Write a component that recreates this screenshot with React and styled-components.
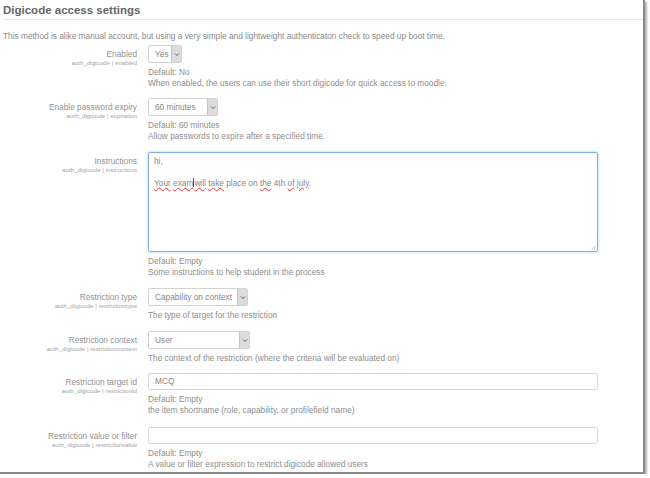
import React from "react";
import styled, { createGlobalStyle } from "styled-components";

const Global = createGlobalStyle`
  html, body {
    margin: 0;
    padding: 0;
    background: #ffffff;
  }
  body {
    font-family: "Liberation Sans", Arial, sans-serif;
    -webkit-font-smoothing: antialiased;
  }
`;

const Frame = styled.div`
  width: 645px;
  height: 474px;
  background: #fff;
  border-right: 2px solid #8a8a8a;
  border-bottom: 2px solid #8a8a8a;
  box-shadow: 2px 2px 2px rgba(0, 0, 0, 0.3);
  overflow: hidden;
  box-sizing: border-box;
  padding: 0 3px;
`;

const Title = styled.h2`
  margin: 0;
  padding-top: 3px;
  height: 15px;
  font-size: 11.5px;
  font-weight: bold;
  color: #666;
  line-height: 15px;
`;

const Rule = styled.div`
  height: 1px;
  background: #e6e6e6;
  margin-top: 1px;
  margin-right: -3px;
`;

const Intro = styled.p`
  margin: 11px 0 0;
  font-size: 8.3px;
  line-height: 11px;
  color: #8a8a8a;
`;

const Form = styled.div`
  margin-top: 3px;
  display: flex;
  flex-direction: column;
`;

const Row = styled.div`
  display: grid;
  grid-template-columns: 134px 1fr;
  column-gap: 11px;
  margin-bottom: ${(p) => p.$gap || 9}px;
`;

const LabelCol = styled.div`
  text-align: right;
  padding-top: 4px;
`;

const Label = styled.div`
  font-size: 8.3px;
  line-height: 10px;
  color: #929292;
`;

const Key = styled.div`
  font-size: 6.2px;
  line-height: 8px;
  color: #a4a4a4;
`;

const Field = styled.div`
  display: flex;
  flex-direction: column;
  align-items: flex-start;
`;

const SelectBox = styled.div`
  width: ${(p) => p.$w}px;
  height: 18px;
  box-sizing: border-box;
  border: 1px solid #d2d2d2;
  border-radius: 2px;
  display: flex;
  align-items: stretch;
  background: #fff;
`;

const SelectText = styled.div`
  flex: 1;
  font-size: 8.3px;
  line-height: 16px;
  padding-left: 6px;
  color: #888;
  white-space: nowrap;
  overflow: hidden;
`;

const Arrow = styled.div`
  width: 9px;
  background: #dcdcdc;
  border-left: 1px solid #c2c2c2;
  display: flex;
  align-items: center;
  justify-content: center;
`;

const Input = styled.div`
  width: 450px;
  height: 17px;
  box-sizing: border-box;
  border: 1px solid #d8d8d8;
  border-radius: 2px;
  font-size: 8.3px;
  line-height: 15px;
  padding-left: 6px;
  color: #888;
`;

const TextBox = styled.div`
  position: relative;
  width: 450px;
  height: 100px;
  box-sizing: border-box;
  border: 1px solid #7fb0e0;
  border-radius: 2px;
  box-shadow: 0 0 3px rgba(102, 160, 225, 0.6);
  padding: 3px 5px;
  font-size: 8.3px;
  line-height: 11px;
  color: #888;
`;

const Spell = styled.span`
  text-decoration: underline wavy #e33;
  text-decoration-thickness: 1px;
  text-underline-offset: 1px;
`;

const Caret = styled.span`
  display: inline-block;
  width: 0;
  height: 9px;
  border-left: 1px solid #555;
  vertical-align: -1px;
`;

const Grip = styled.svg`
  position: absolute;
  right: 1px;
  bottom: 1px;
`;

const Help = styled.div`
  margin-top: 4px;
  font-size: 8.3px;
  line-height: 11px;
  color: #8e8e8e;
`;

const Chevron = () => (
  <svg width="6" height="5" viewBox="0 0 6 5">
    <path d="M1 1.5 L3 3.5 L5 1.5" fill="none" stroke="#666" strokeWidth="1" />
  </svg>
);

const Select = ({ value, width }) => (
  <SelectBox $w={width}>
    <SelectText>{value}</SelectText>
    <Arrow>
      <Chevron />
    </Arrow>
  </SelectBox>
);

const Setting = ({ label, name, gap, children, help }) => (
  <Row $gap={gap}>
    <LabelCol>
      <Label>{label}</Label>
      <Key>auth_digicode | {name}</Key>
    </LabelCol>
    <Field>
      {children}
      <Help>
        {help.map((h) => (
          <div key={h}>{h}</div>
        ))}
      </Help>
    </Field>
  </Row>
);

export default function App() {
  return (
    <>
      <Global />
      <Frame>
        <Title>Digicode access settings</Title>
        <Rule />
        <Intro>
          This method is alike manual account, but using a very simple and lightweight
          authenticaton check to speed up boot time.
        </Intro>
        <Form>
          <Setting
            label="Enabled"
            name="enabled"
            gap={9}
            help={["Default: No", "When enabled, the users can use their short digicode for quick access to moodle."]}
          >
            <Select value="Yes" width={34} />
          </Setting>
          <Setting
            label="Enable password expiry"
            name="expiration"
            gap={10}
            help={["Default: 60 minutes", "Allow passwords to expire after a specified time."]}
          >
            <Select value="60 minutes" width={70} />
          </Setting>
          <Setting
            label="Instructions"
            name="instructions"
            gap={10}
            help={["Default: Empty", "Some instructions to help student in the process"]}
          >
            <TextBox>
              <div>hi,</div>
              <div>&nbsp;</div>
              <div>
                <Spell>Your</Spell> <Spell>exam</Spell>
                <Caret />
                <Spell>will</Spell> <Spell>take</Spell> place on <Spell>the</Spell> 4th{" "}
                <Spell>of</Spell> <Spell>july</Spell>.
              </div>
              <Grip width="5" height="5" viewBox="0 0 5 5">
                <path d="M4.5 0.5 L0.5 4.5 M4.5 2.5 L2.5 4.5" stroke="#aaa" strokeWidth="0.7" />
              </Grip>
            </TextBox>
          </Setting>
          <Setting
            label="Restriction type"
            name="restrictiontype"
            gap={10}
            help={["The type of target for the restriction"]}
          >
            <Select value="Capability on context" width={100} />
          </Setting>
          <Setting
            label="Restriction context"
            name="restrictioncontext"
            gap={9}
            help={["The context of the restriction (where the criteria will be evaluated on)"]}
          >
            <Select value="User" width={102} />
          </Setting>
          <Setting
            label="Restriction target id"
            name="restrictionid"
            gap={11}
            help={["Default: Empty", "the item shortname (role, capability, or profilefield name)"]}
          >
            <Input>MCQ</Input>
          </Setting>
          <Setting
            label="Restriction value or filter"
            name="restrictionvalue"
            gap={0}
            help={["Default: Empty", "A value or filter expression to restrict digicode allowed users"]}
          >
            <Input />
          </Setting>
        </Form>
      </Frame>
    </>
  );
}
